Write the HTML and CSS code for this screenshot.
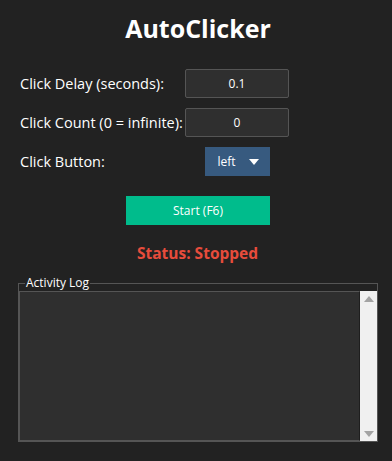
FILE: index.html
```html
<!DOCTYPE html>
<html lang="en">
<head>
    <meta charset="UTF-8">
    <meta name="viewport" content="width=device-width, initial-scale=1.0">
    <title>AutoClicker</title>
    <link rel="stylesheet" href="styles.css">
</head>
<body>
    <div class="app">
        <h1>AutoClicker</h1>

        <div class="settings">
            <label class="field-label">Click Delay (seconds):</label>
            <div class="entry">0.1</div>

            <label class="field-label">Click Count (0 = infinite):</label>
            <div class="entry">0</div>

            <label class="field-label">Click Button:</label>
            <div class="dropdown">
                <span>left</span>
                <svg width="10" height="6" viewBox="0 0 10 6">
                    <path d="M0 0 L10 0 L5 6 Z" fill="#fff"/>
                </svg>
            </div>
        </div>

        <div class="actions">
            <button class="start-btn">Start (F6)</button>
        </div>

        <div class="status">Status: Stopped</div>

        <fieldset class="log-frame">
            <legend>Activity Log</legend>
            <div class="log">
                <div class="log-text"></div>
                <div class="scrollbar">
                    <svg width="10" height="6" viewBox="0 0 10 6">
                        <path d="M5 0 L10 6 L0 6 Z" fill="#a3a3a3"/>
                    </svg>
                    <svg width="10" height="6" viewBox="0 0 10 6">
                        <path d="M0 0 L10 0 L5 6 Z" fill="#a3a3a3"/>
                    </svg>
                </div>
            </div>
        </fieldset>
    </div>
</body>
</html>
```

FILE: styles.css
```css
* {
    margin: 0;
    padding: 0;
    box-sizing: border-box;
}

body {
    background: #222222;
    color: #fff;
    font-family: "Open Sans", "Noto Sans", sans-serif;
    width: 392px;
    height: 461px;
    overflow: hidden;
}

.app {
    padding-top: 12px;
}

h1 {
    font-size: 25px;
    font-weight: 700;
    line-height: 32px;
    text-align: center;
    height: 32px;
    padding-left: 4px;
}

.settings {
    margin: 25px 0 0 20px;
    display: grid;
    grid-template-columns: 165px 104px;
    grid-auto-rows: 29px;
    row-gap: 10px;
    align-items: center;
}

.field-label {
    font-size: 14.5px;
    white-space: nowrap;
}

.entry {
    height: 29px;
    background: #2f2f2f;
    border: 1px solid #555;
    border-radius: 2px;
    font-size: 12px;
    display: flex;
    align-items: center;
    justify-content: center;
}

.dropdown {
    justify-self: center;
    width: 65px;
    height: 29px;
    background: #375a7f;
    font-size: 12px;
    display: flex;
    align-items: center;
    justify-content: space-between;
    padding: 0 11px 0 13px;
}

.actions {
    margin-top: 20px;
    display: flex;
    justify-content: center;
}

.start-btn {
    width: 144px;
    height: 29px;
    margin-left: 4px;
    background: #00bc8c;
    border: none;
    color: #fff;
    font-family: inherit;
    font-size: 12px;
}

.status {
    margin-top: 18px;
    height: 20px;
    line-height: 20px;
    text-align: center;
    color: #e74c3c;
    font-size: 15.5px;
    font-weight: 700;
    padding-left: 3px;
}

.log-frame {
    margin: 12px 0 0 18px;
    width: 360px;
    border: 1px solid #555;
}

.log-frame legend {
    margin-left: 6px;
    padding: 0 1px;
    font-size: 12px;
    line-height: 16px;
}

.log {
    display: flex;
    height: 150px;
}

.log-text {
    flex: 1;
    background: #2f2f2f;
    border-top: 1px solid #555;
    border-left: 1px solid #555;
    border-bottom: 1px solid #555;
    border-right: 1px solid #1e1e1e;
}

.scrollbar {
    width: 17px;
    background: #f0f0f0;
    display: flex;
    flex-direction: column;
    justify-content: space-between;
    align-items: center;
    padding: 5px 0 4px;
}
```
